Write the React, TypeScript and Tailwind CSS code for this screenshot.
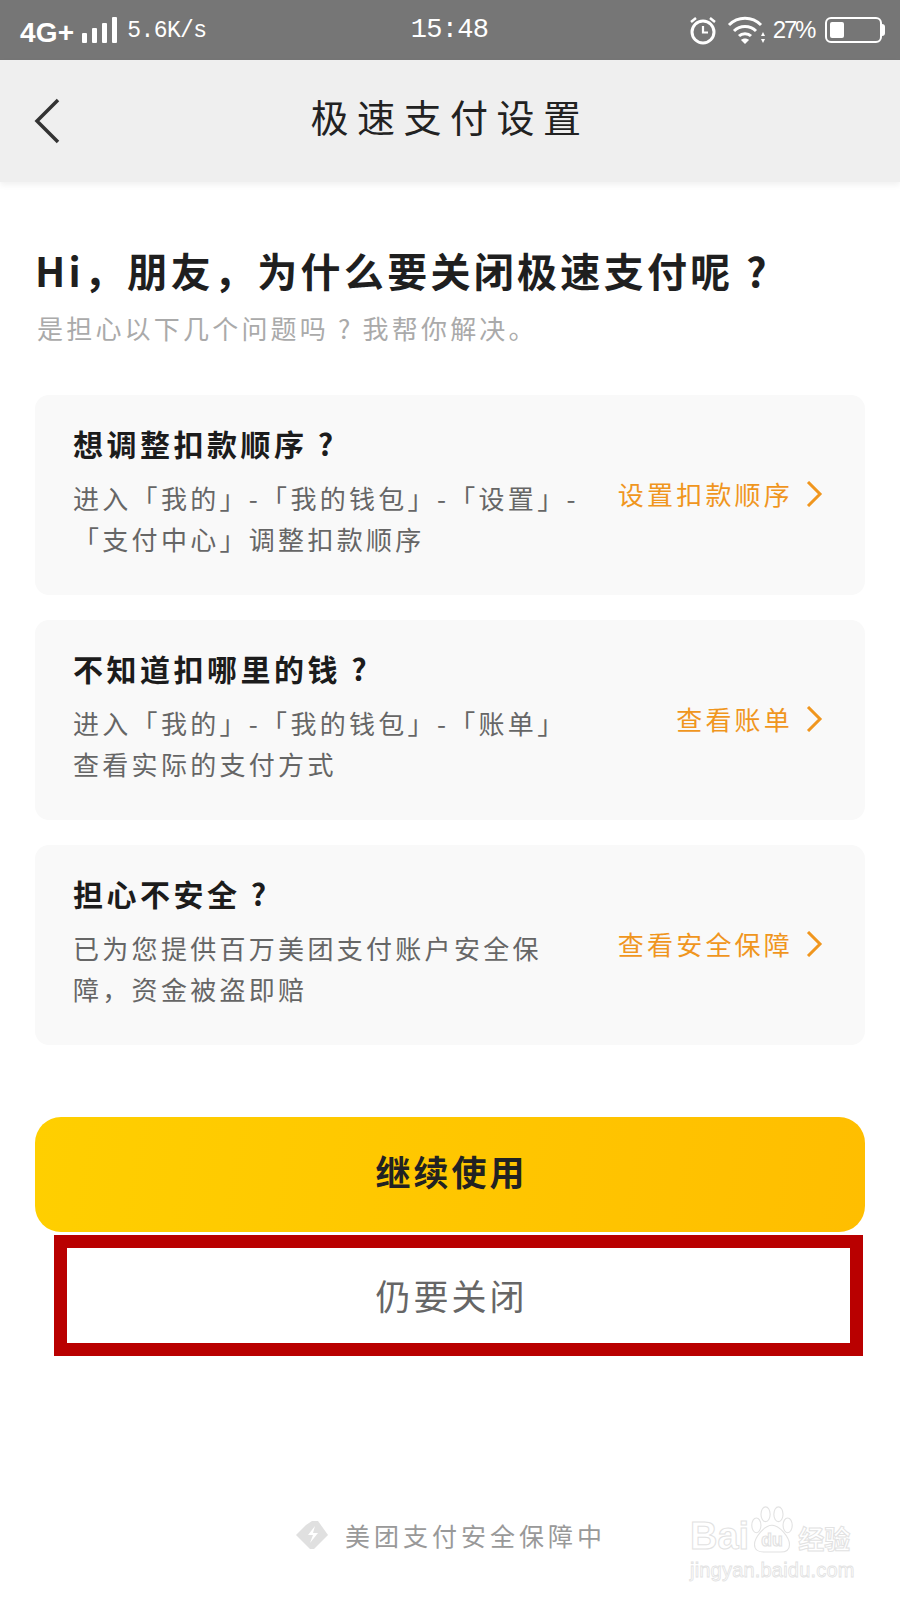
const CJK = "font-['Noto_Sans_CJK_SC','Noto_Sans',sans-serif]";

const CARDS = [
  {
    title: "想调整扣款顺序 ?",
    lines: ["进入「我的」-「我的钱包」-「设置」-", "「支付中心」调整扣款顺序"],
    link: "设置扣款顺序",
  },
  {
    title: "不知道扣哪里的钱 ?",
    lines: ["进入「我的」-「我的钱包」-「账单」", "查看实际的支付方式"],
    link: "查看账单",
  },
  {
    title: "担心不安全 ?",
    lines: ["已为您提供百万美团支付账户安全保", "障，资金被盗即赔"],
    link: "查看安全保障",
  },
];

function StatusBar() {
  return (
    <div className="flex h-[60px] items-center justify-between bg-[#767676] pl-5 pr-[15px] text-white">
      <div className="flex w-[300px] items-center">
        <span className="pt-[5px] font-['Liberation_Sans',sans-serif] text-[28px] leading-none font-bold tracking-[0.2px]">4G+</span>
        <svg width="38" height="28" viewBox="0 0 38 28" className="ml-[7px]" fill="#fff">
          <rect x="1" y="17" width="5" height="10" rx="1" />
          <rect x="11" y="12" width="5" height="15" rx="1" />
          <rect x="21" y="7" width="5" height="20" rx="1" />
          <rect x="31" y="1" width="5" height="26" rx="1" />
        </svg>
        <span className="ml-[8px] pt-[3px] font-['Liberation_Mono',monospace] text-[23px] leading-none tracking-[-0.6px]">5.6K/s</span>
      </div>
      <span className="mr-[6px] font-['Liberation_Mono',monospace] text-[27px] leading-none tracking-[-0.7px]">15:48</span>
      <div className="flex w-[300px] items-center justify-end">
        <svg width="30" height="30" viewBox="0 0 30 30" fill="none" stroke="#fff" strokeWidth="3">
          <circle cx="15" cy="17" r="11" />
          <path d="M15 11v6.5h5" strokeWidth="2.2" />
          <path d="M3 7l5-4M27 7l-5-4" strokeWidth="2.5" />
        </svg>
        <svg width="40" height="30" viewBox="0 0 40 30" fill="none" stroke="#fff" strokeWidth="3" className="ml-[9px]">
          <path d="M2 10c9-9 23-9 32 0" />
          <path d="M7 16c6-6 16-6 22 0" />
          <path d="M12 21c3-3 9-3 12 0" />
          <path d="M18 29l-4-4c2-2 6-2 8 0z" fill="#fff" stroke="none" />
          <path d="M36 17l-2 4h4zM36 28l-2-4h4z" fill="#fff" stroke="none" />
        </svg>
        <span className="ml-[6px] font-['Liberation_Sans',sans-serif] text-[24px] leading-none tracking-[-2.3px]">27%</span>
        <div className="ml-[11px] flex h-[26px] w-[57px] items-center rounded-[6px] border-2 border-white p-[3px]">
          <div className="h-full w-[14px] rounded-[2px] bg-white" />
        </div>
        <div className="h-[12px] w-[3px] rounded-r-full bg-white" />
      </div>
    </div>
  );
}

function NavBar() {
  return (
    <div className="grid h-[122px] grid-cols-[1fr_auto_1fr] items-center bg-[#efefef] shadow-[0_3px_6px_rgba(0,0,0,0.06)]">
      <svg width="28" height="46" viewBox="0 0 28 46" fill="none" stroke="#333" strokeWidth="3.5" className="ml-[33px]">
        <path d="M25 2L4 23l21 21" />
      </svg>
      <h1 className="mb-[10px] text-[38px] leading-none tracking-[8.5px] text-[#222]">极速支付设置</h1>
      <div />
    </div>
  );
}

function Card({ title, lines, link }: { title: string; lines: string[]; link: string }) {
  return (
    <div className="flex h-[200px] items-center justify-between rounded-[14px] bg-[#f9f9f9] pl-[38px] pr-[42px]">
      <div className="pb-[9px]">
        <h3 className="text-[30px] leading-[40px] font-bold tracking-[3.5px] text-[#1c1c1c]">{title}</h3>
        <p className="mt-[14px] text-[26px] leading-[41px] tracking-[3.3px] whitespace-nowrap text-[#666]">
          {lines[0]}
          <br />
          {lines[1]}
        </p>
      </div>
      <div className="mb-[2px] flex items-center text-[#f0961e]">
        <span className="text-[26px] leading-none tracking-[3.2px]">{link}</span>
        <svg width="17" height="26" viewBox="0 0 17 26" fill="none" stroke="currentColor" strokeWidth="3" className="ml-[13px]">
          <path d="M2 1l12 12L2 25" />
        </svg>
      </div>
    </div>
  );
}

function Watermark() {
  return (
    <div className="absolute top-[1503px] left-[690px] w-[165px] whitespace-nowrap">
      <div className="flex items-end">
        <span className="font-['Liberation_Sans',sans-serif] text-[38px] leading-none font-bold text-white [-webkit-text-stroke:1px_#e2e2e2]">Bai</span>
        <svg width="46" height="52" viewBox="0 0 50 52" fill="#fff" stroke="#e2e2e2" strokeWidth="1.2" className="shrink-0">
          <ellipse cx="8" cy="22" rx="5" ry="8" />
          <ellipse cx="18" cy="10" rx="5" ry="8" />
          <ellipse cx="32" cy="10" rx="5" ry="8" />
          <ellipse cx="42" cy="22" rx="5" ry="8" />
          <path d="M25 22c8 0 19 13 19 21 0 6-5 8-10 8H16c-5 0-10-2-10-8 0-8 11-21 19-21z" />
          <text x="25" y="45" textAnchor="middle" fontSize="19" fontFamily="Liberation Sans" fontWeight="700">du</text>
        </svg>
        <span className="ml-[3px] text-[26px] leading-[34px] font-bold text-white [-webkit-text-stroke:1px_#e2e2e2]">经验</span>
      </div>
      <div className="mt-[5px] font-['Liberation_Sans',sans-serif] text-[20px] leading-none tracking-[0.2px] text-white [-webkit-text-stroke:0.8px_#e2e2e2]">jingyan.baidu.com</div>
    </div>
  );
}

export default function App() {
  return (
    <div className={`relative h-[1600px] w-[900px] overflow-hidden bg-white ${CJK}`}>
      <StatusBar />
      <NavBar />
      <main className="px-[35px]">
        <h2 className="mt-[63px] text-[40px] leading-[50px] font-bold tracking-[3.3px] text-[#1f1f1f]">Hi，朋友，为什么要关闭极速支付呢 ?</h2>
        <p className="mt-[16px] pl-[2px] text-[26px] leading-[34px] tracking-[3.2px] text-[#aaa]">是担心以下几个问题吗 ? 我帮你解决。</p>
        <div className="mt-[50px] flex flex-col gap-[25px]">
          {CARDS.map((c) => (
            <Card key={c.title} {...c} />
          ))}
        </div>
        <button className="mt-[72px] flex h-[115px] w-full items-center justify-center rounded-[26px] bg-[linear-gradient(100deg,#ffcf00,#ffbe00)] pb-[6px] pl-[3px] text-[35px] font-bold tracking-[3px] text-[#222]">
          继续使用
        </button>
        <div className="mt-[3px] ml-[19px] flex h-[121px] w-[809px] items-center justify-center border-[13px] border-[#b90000] pr-[14px] text-[35px] tracking-[3px] text-[#666]">
          仍要关闭
        </div>
      </main>
      <div className="mt-[165px] flex items-center pl-[296px]">
        <svg width="32" height="28" viewBox="0 0 32 28" fill="#e0e0e0">
          <path d="M16 0h6l10 14-14 14h-4L0 14 10 4z" />
          <path d="M19 5l-7 9h5l-3 8 8-10h-5z" fill="#fff" />
        </svg>
        <span className="ml-[17px] text-[25px] leading-none tracking-[4px] text-[#999]">美团支付安全保障中</span>
      </div>
      <Watermark />
    </div>
  );
}
